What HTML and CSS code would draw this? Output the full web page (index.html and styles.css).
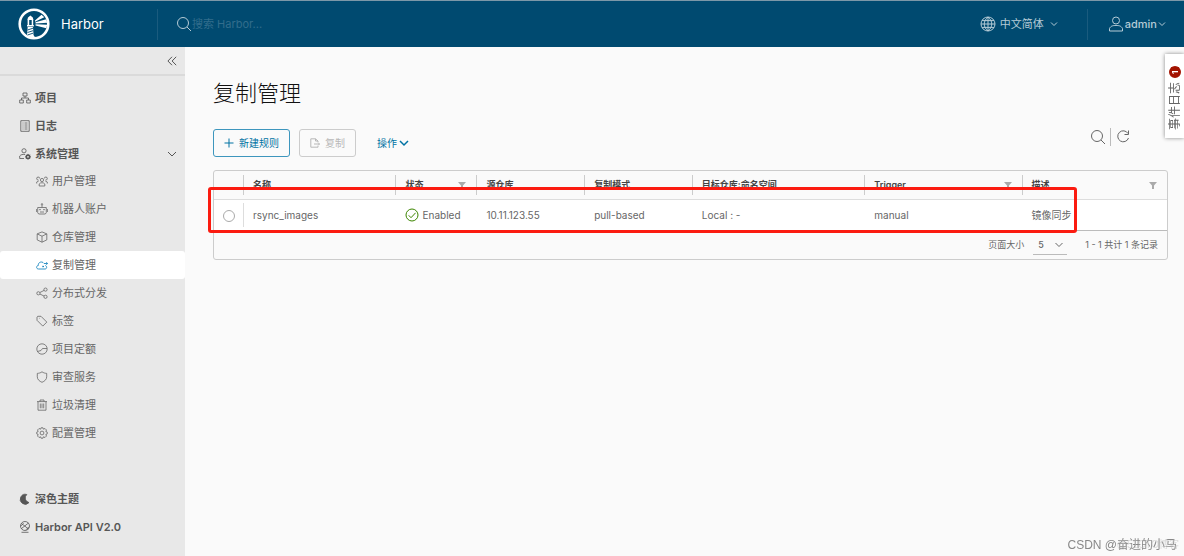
FILE: index.html
```html
<!DOCTYPE html>
<html lang="zh-CN">
<head>
<meta charset="utf-8">
<title>Harbor</title>
<link rel="stylesheet" href="styles.css">
</head>
<body>
<header class="header">
  <a class="brand" href="#">
    <svg class="logo" viewBox="0 0 32 32"><circle cx="16" cy="16" r="14.3" fill="none" stroke="#fff" stroke-width="2.6"/><path fill="#fff" d="M9 27.500 9.700 19h5.300l.5 8 2 3-7-1.500zM9.600 12h1.600v5.500H9.600zM13.700 12h1.500v5.500h-1.500zM9.300 12l.7-2.500 2.400-2 2.400 2 .7 2.500zM9 17h6.800v1.400H9zM17 12.500l6.500-5.700 2.800 2.400-9.300 4.600zM17.500 14.300l10.800-3 .9 3.400-11.700.9zM17.500 16.200l11.700.6-.9 3.400-10.800-2.800z"/><path stroke="#004a70" stroke-width=".9" fill="none" d="M9.500 22l5.500-1.800M9.500 24.500l5.500-1.800M9.500 27l5.500-1.800"/></svg>
    <span>Harbor</span>
  </a>
  <label class="search">
    <svg class="i16" viewBox="0 0 16 16"><circle cx="7" cy="7" r="5.500"/><path d="m11 11 4 4"/></svg>
    <input type="text" placeholder="搜索 Harbor..." aria-label="搜索 Harbor">
  </label>
  <button class="head-btn lang">
    <svg class="i16" viewBox="0 0 16 16"><circle cx="8" cy="8" r="7"/><path d="M8 1v14M1 8h14M2 4.600h12M2 11.400h12M8 1C3 5 3 11 8 15M8 1c5 4 5 10 0 14"/></svg>
    <span>中文简体</span>
    <svg class="chev" viewBox="0 0 8 8"><path d="m1 2.500 3 3 3-3"/></svg>
  </button>
  <button class="head-btn user">
    <svg class="i16" viewBox="0 0 16 16"><circle cx="8" cy="4.500" r="3.500"/><path d="M1.500 15v-2.500C3 9.500 5.500 9.500 8 9.500s5 0 6.500 3V15z"/></svg>
    <span>admin</span>
    <svg class="chev" viewBox="0 0 8 8"><path d="m1 2.500 3 3 3-3"/></svg>
  </button>
</header>
<div class="body">
  <nav class="side">
    <button class="collapse" aria-label="收起"><svg viewBox="0 0 10 10"><path d="M5 .8.900 5 5 9.200M9.200.8 5.100 5l4.100 4.200"/></svg></button>
    <div class="menu">
      <a class="item top" href="#"><svg viewBox="0 0 12 12"><path d="M4 1h4v3H4zM.7 8h3.600v3H.7zM7.700 8h3.600v3H7.700zM6 4v2M2.500 8V6h7v2"/></svg>项目</a>
      <a class="item top" href="#"><svg viewBox="0 0 12 12"><path d="M1.800.7h8.400v10.600H1.800zM3.500 3h1M5.500 3h3M3.500 5h1M5.500 5h3M3.500 7h1M5.500 7h3M3.500 9h1M5.500 9h3"/></svg>日志</a>
      <button class="item top group"><svg viewBox="0 0 12 12"><circle cx="5" cy="2.800" r="2.100"/><path d="M5 10.500H.7V8C2 6.500 3.500 6.300 6 6.500"/><circle cx="9" cy="8.800" r="1.700" stroke-width="1.600"/><path d="M9 5.900v1M9 10.700v1M6.100 8.800h1M10.900 8.800h1M7 6.800l.7.7M10.300 10.100l.7.7M11 6.800l-.7.7M7.700 10.100l-.7.7"/></svg>系统管理<svg class="fold" viewBox="0 0 10 10"><path d="m1 3 4 4 4-4"/></svg></button>
      <div class="sub">
        <a class="item" href="#"><svg viewBox="0 0 12 12"><circle cx="6" cy="5" r="1.600"/><path d="M3.200 11V9c1-1.700 4.600-1.700 5.600 0v2zM3.700 3.500A1.500 1.500 0 1 0 2.500 5M.7 8.500V7l2-1M8.300 3.500A1.500 1.500 0 1 1 9.500 5M11.300 8.500V7l-2-1"/></svg>用户管理</a>
        <a class="item" href="#"><svg viewBox="0 0 12 12"><path d="M1.700 4.500h8.600v5.200l-1 1.300H2.700l-1-1.300zM6 4.500V2M.4 6v3M11.600 6v3M4 9h4"/><circle cx="6" cy="1.300" r=".7"/><circle cx="4" cy="6.700" r=".4"/><circle cx="8" cy="6.700" r=".4"/></svg>机器人账户</a>
        <a class="item" href="#"><svg viewBox="0 0 12 12"><path d="m6 .9 4.800 2v6L6 11.200 1.200 8.900v-6zM1.200 2.900 6 5.200l4.800-2.300M6 5.200v6"/></svg>仓库管理</a>
        <a class="item active" href="#"><svg viewBox="0 0 12 12"><path d="M9.300 6.500c2 .7 1.700 3.500-.3 3.500H2.500C0 10 0 6.700 2.300 6.500 2 2.800 6.300 2 7.700 4.300"/><path d="M8 4.500h3.500M10.300 3.200l1.300 1.300-1.300 1.300M6.500 7.500H8M7 6.700v1.600"/></svg>复制管理</a>
        <a class="item" href="#"><svg viewBox="0 0 12 12"><circle cx="2.400" cy="6.300" r="1.600"/><circle cx="9.500" cy="2.600" r="1.600"/><circle cx="9.500" cy="9.800" r="1.600"/><path d="m3.900 5.500 4.200-2.100M3.900 7l4.200 2.100"/></svg>分布式分发</a>
        <a class="item" href="#"><svg viewBox="0 0 12 12"><path d="M1 2v3.300l5.800 5.800 4-4L5 1.300H1.700zM3 3.300h.5"/></svg>标签</a>
        <a class="item" href="#"><svg viewBox="0 0 12 12"><circle cx="6" cy="6" r="5.200"/><path d="M1.500 8.500 5 7.500 6.500 5.500H11"/></svg>项目定额</a>
        <a class="item" href="#"><svg viewBox="0 0 12 12"><path d="M6 .8c1.600 1.100 3 1.500 4.700 1.600v3.400C10.700 8.500 8.500 10.300 6 11.300 3.500 10.300 1.300 8.500 1.300 5.800V2.400C3 2.300 4.400 1.900 6 .8z"/></svg>审查服务</a>
        <a class="item" href="#"><svg viewBox="0 0 12 12"><path d="M1 2.600h10M4 2.600V1h4v1.600M2 2.600v8.600h8V2.600M4.300 4.500v4.800M6 4.500v4.800M7.700 4.500v4.800"/></svg>垃圾清理</a>
        <a class="item" href="#"><svg viewBox="0 0 12 12"><circle cx="6" cy="6" r="1.900"/><path d="m5 .8h2l.4 1.400 1.600-.7L10.500 3l-.7 1.500 1.400.5v2l-1.400.5.7 1.500L9 10.500l-1.600-.7L7 11.200H5l-.4-1.400-1.600.7L1.500 9l.7-1.500L.8 7V5l1.400-.5L1.500 3 3 1.500l1.600.7z"/></svg>配置管理</a>
      </div>
    </div>
    <div class="foot">
      <button class="item top"><svg viewBox="0 0 12 12"><path class="solid" d="M7.800 1.500A5 5 0 1 0 10 9.600 4.700 4.700 0 0 1 7.800 1.500z"/></svg>深色主题</button>
      <a class="item top" href="#"><svg viewBox="0 0 12 12"><circle cx="6" cy="5" r="4.500"/><path d="M2.500 2.500 9.500 8M9.500 2 2.300 7.700M1.700 5l3-2.600M7 8.800l3-3M2.500 11.300h7"/></svg>Harbor API V2.0</a>
    </div>
  </nav>
  <main class="main">
    <h1>复制管理</h1>
    <div class="toolbar">
      <button class="btn primary"><svg viewBox="0 0 10 10"><path d="M5 .5v9M.5 5h9"/></svg>新建规则</button>
      <button class="btn" disabled><svg viewBox="0 0 10 10"><path d="M8 4V3L5.500.8H.8v8.400H8V8M5.500.8V3H8M4 6h5.500M8 4.500 9.500 6 8 7.500"/></svg>复制</button>
      <button class="action">操作<svg viewBox="0 0 10 10"><path d="m1 3 4 4 4-4"/></svg></button>
      <div class="tools">
        <button aria-label="搜索"><svg viewBox="0 0 16 16"><circle cx="7" cy="7" r="5.500"/><path d="m11 11 4 4"/></svg></button>
        <button aria-label="刷新"><svg viewBox="0 0 16 16"><path d="M13 4.500A5.500 5.500 0 1 0 13.500 9M13.500 1.500v4h-4"/></svg></button>
      </div>
    </div>
    <div class="grid">
      <table>
        <colgroup><col class="c-pick"><col class="c-name"><col class="c-state"><col class="c-src"><col class="c-mode"><col class="c-dest"><col class="c-trig"><col></colgroup>
        <thead><tr>
          <th></th><th><span>名称</span></th>
          <th><span>状态<svg class="filter" viewBox="0 0 8 8"><path d="M0 1h8L5 4.500V8H3V4.500z"/></svg></span></th>
          <th><span>源仓库</span></th><th><span>复制模式</span></th><th><span>目标仓库:命名空间</span></th>
          <th><span>Trigger<svg class="filter" viewBox="0 0 8 8"><path d="M0 1h8L5 4.500V8H3V4.500z"/></svg></span></th>
          <th><span>描述<svg class="filter" viewBox="0 0 8 8"><path d="M0 1h8L5 4.500V8H3V4.500z"/></svg></span></th>
        </tr></thead>
        <tbody><tr>
          <td class="pick"><input type="radio" name="rule" aria-label="rsync_images"></td>
          <td class="name"><span>rsync_images</span></td>
          <td><span class="state"><svg viewBox="0 0 14 14"><circle cx="7" cy="7" r="6"/><path d="m3.700 7.300 2.300 2.400 4.600-4.900"/></svg>Enabled</span></td>
          <td>10.11.123.55</td><td>pull-based</td><td>Local : -</td><td>manual</td><td>镜像同步</td>
        </tr></tbody>
      </table>
      <div class="pager">
        <label for="size">页面大小</label>
        <span class="pick-size"><select id="size"><option>5</option><option>15</option></select><svg viewBox="0 0 8 8"><path d="m.5 2 3.500 3.500L7.500 2"/></svg></span>
        <span>1 - 1 共计 1 条记录</span>
      </div>
      <div class="mark"></div>
    </div>
  </main>
</div>
<button class="events"><span>事件日志</span><b>1</b></button>
<div class="credit">CSDN @奋进的小马<span>@51CTO博客</span></div>
</body>
</html>
```

FILE: styles.css
```css
* { box-sizing: border-box; }
body {
  margin: 0;
  min-height: 100vh;
  display: flex;
  flex-direction: column;
  background: #fafafa;
  color: #666;
  font: 11px/16px Inter, "Noto Sans CJK SC", sans-serif;
}
button, input, select { font: inherit; color: inherit; background: none; border: 0; padding: 0; margin: 0; }
a { color: inherit; text-decoration: none; }
svg { fill: none; stroke: currentColor; stroke-width: 1; flex: none; }

.header {
  display: flex;
  align-items: center;
  height: 47px;
  background: #004a70;
  border-top: 1px solid #7c98a8;
  color: #b5cbd6;
}
.brand { display: flex; align-items: center; gap: 11px; width: 157px; padding-left: 18px; color: #fff; font-size: 13px; }
.logo { width: 32px; height: 32px; stroke: none; }
.i16 { width: 16px; height: 16px; }
.search { display: flex; align-items: center; flex: 1; height: 31px; padding-left: 18px; border-left: 1px solid #1a5b7e; }
.search input { flex: 1; outline: 0; font-size: 11px; }
.search input::placeholder { color: #326d8c; opacity: 1; }
.head-btn { display: flex; align-items: center; height: 31px; }
.chev { width: 8px; height: 8px; }
.lang { gap: 4px; padding-right: 29px; }
.lang .chev { margin-left: 2px; }
.user { gap: 1px; padding: 0 18px 0 20px; border-left: 1px solid #1a5b7e; font-weight: 500; }

.body { display: flex; flex: 1; }
.side { display: flex; flex-direction: column; width: 185px; background: #e8e8e8; color: #565656; }
.collapse { display: flex; justify-content: flex-end; align-items: center; height: 29px; padding-right: 8px; border-bottom: 2px solid #dadada; }
.collapse svg { width: 10px; height: 10px; }
.menu { padding-top: 8px; }
.sub { margin-top: -1px; }
.item { display: flex; align-items: center; gap: 4px; width: 100%; height: 28px; padding: 0 8px 0 36px; color: #666; }
.item svg { width: 12px; height: 12px; stroke-width: 0.8; }
.top { padding-left: 19px; color: #565656; font-weight: 600; }
.item .fold { width: 10px; height: 10px; margin-left: auto; stroke-width: 1; }
.active { background: #fff; border-radius: 3px; }
.active svg { color: #0079b8; }
.solid { fill: currentColor; }
.foot { margin-top: auto; padding-bottom: 15px; }

.main { flex: 1; min-width: 0; padding: 30px 16px 16px 28px; }
h1 { margin: 0; color: #111; font-size: 22px; line-height: 32px; font-weight: 300; }
.toolbar { display: flex; align-items: center; gap: 9px; margin-top: 19px; }
.btn { display: flex; align-items: center; gap: 5px; height: 28px; padding: 0 10px; border: 1px solid #ccc; border-radius: 3px; color: #b8b8b8; font-size: 10px; }
.btn svg { width: 10px; height: 10px; }
.primary { border-color: #3d96bd; color: #0072a3; }
.action { display: flex; align-items: center; gap: 2px; padding-left: 12px; color: #0072a3; font-size: 10px; }
.action svg { width: 10px; height: 10px; stroke-width: 1.500; }
.tools { display: flex; margin: 0 33px 12px auto; }
.tools button { display: flex; padding: 1px 4px; }
.tools button + button { border-left: 1px solid #bbb; }
.tools svg { width: 16px; height: 16px; }

.grid { position: relative; margin-top: 12px; border: 1px solid #ccc; border-radius: 3px; }
table { width: 100%; table-layout: fixed; border-collapse: collapse; }
.c-pick { width: 29px; }
.c-name { width: 16%; }
.c-state { width: 8.500%; }
.c-src, .c-mode { width: 11.300%; }
.c-dest { width: 18.100%; }
.c-trig { width: 16.500%; }
th { height: 28px; padding: 4px 0; text-align: left; font-size: 9px; font-weight: 600; color: #444; }
th span { display: flex; align-items: center; justify-content: space-between; height: 20px; padding: 0 10px 0 9px; border-left: 1px solid #ccc; }
.filter { width: 8px; height: 8px; fill: #aaa; stroke: none; }
td { height: 31px; padding: 0 0 0 10px; background: #fff; border-top: 1px solid #ddd; border-bottom: 1px solid #bbb; font-size: 10px; white-space: nowrap; }
.pick { padding: 0; text-align: center; }
.pick input { appearance: none; display: inline-block; width: 12px; height: 12px; border: 1px solid #aaa; border-radius: 50%; vertical-align: middle; }
.name { padding: 0; }
.name span { display: block; padding: 4px 0 4px 9px; border-left: 1px solid #ddd; }
.state { display: flex; align-items: center; gap: 3px; }
.state svg { width: 14px; height: 14px; color: #3c8500; }
.pager { display: flex; align-items: center; justify-content: flex-end; gap: 9px; height: 28px; padding-right: 9px; font-size: 9px; }
.pick-size { display: flex; align-items: center; width: 34px; height: 20px; margin-right: 9px; border-bottom: 1px solid #bbb; }
.pick-size select { appearance: none; flex: 1; min-width: 0; padding-left: 5px; font-weight: 500; }
.pick-size svg { width: 8px; height: 8px; margin-right: 4px; }
.mark { position: absolute; left: -6px; top: 16px; width: 91.200%; height: 46px; border: 3px solid #fb1b10; border-radius: 3px; pointer-events: none; }

.events {
  position: fixed;
  top: 54px;
  right: 0;
  display: flex;
  align-items: center;
  gap: 4px;
  padding: 8px 2px 12px 1px;
  writing-mode: vertical-rl;
  text-orientation: sideways;
  transform: rotate(180deg);
  background: #fff;
  box-shadow: 0 0 4px #888;
  font-size: 12px;
}
.events b { width: 12px; height: 12px; border-radius: 50%; background: #a31300; color: #fff; font-size: 8px; line-height: 12px; text-align: center; }
.credit { position: fixed; right: 7px; bottom: 3px; color: #888; font: 12px/16px "Liberation Sans", "Noto Sans CJK SC", sans-serif; }
.credit span { position: absolute; right: -2px; top: 0; color: #bbb; font-size: 10px; opacity: 0.5; }
```
